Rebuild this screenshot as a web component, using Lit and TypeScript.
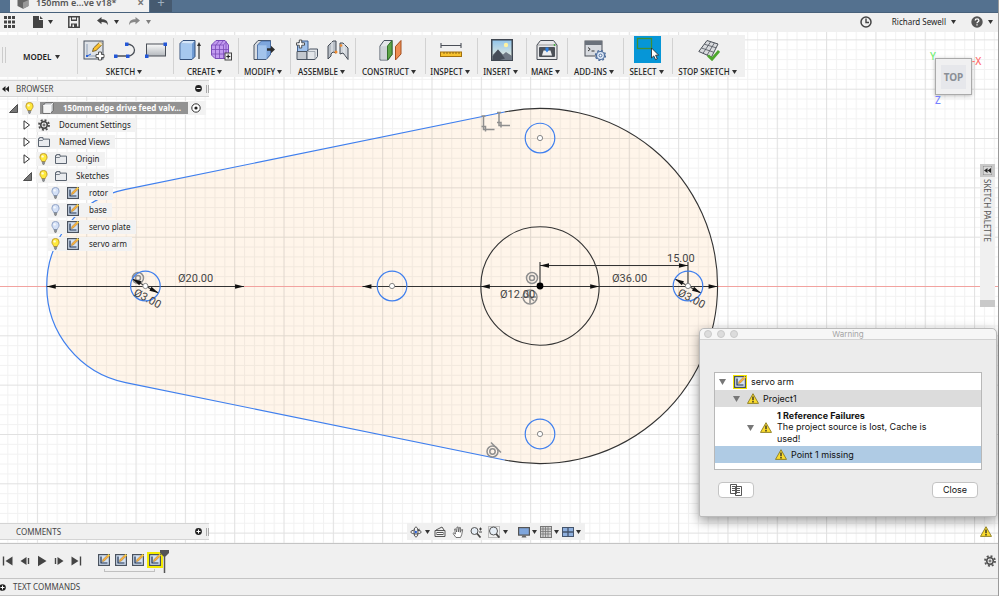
import { LitElement, html, svg, css, nothing, TemplateResult } from "lit";
import { customElement, property } from "lit/decorators.js";

const icon = (w: number, h: number, body: unknown) =>
  html`<svg width=${w} height=${h} viewBox="0 0 ${w} ${h}" aria-hidden="true">${body}</svg>`;

const caret = html`<svg class="caret" width="5" height="4" viewBox="0 0 5 4" aria-hidden="true"><path d="M0 0h5L2.5 4z" fill="#333"/></svg>`;

const sketchIcon = (marked = false) => html`<svg class=${marked ? "marked" : ""} width="12" height="12" viewBox="0 0 12 12" aria-hidden="true">
  <rect x=".6" y=".6" width="10.8" height="10.8" fill="#d3e1f3" stroke="#4a525e" stroke-width="1.2"/>
  <path d="M3 2.500v6.500h6.500" fill="none" stroke="#1d2f4d" stroke-width="1.2"/>
  <path d="M4.300 7.800l.6-2.300L9.700.9l1.400 1.400-4.700 4.700z" fill="#fbb03b" stroke="#8a6a2a" stroke-width=".4"/>
  <path d="M9.300 1.200L10.600 0 12 1.500l-1.200 1.200z" fill="#ffd84a"/>
</svg>`;

const gear = (s: number, color: string) => html`<svg width=${s} height=${s} viewBox="0 0 12 12" aria-hidden="true">
  <g fill="none" stroke=${color}><circle cx="6" cy="6" r="3.3" stroke-width="1.7"/>
  <circle cx="6" cy="6" r="5" stroke-width="1.8" stroke-dasharray="1.96 1.96"/><circle cx="6" cy="6" r="1" stroke-width="1"/></g></svg>`;

const folder = icon(12, 10, svg`<path d="M.5 9.500v-8h1V.6h3.500v1.500h6.500v7.400z" fill="#e9ebee" stroke="#5b6470"/><path d="M1 3.500h3.500l1-1.200" fill="none" stroke="#5b6470" stroke-width=".8"/>`);

const bulb = (on: boolean) => html`<svg width="11" height="12" viewBox="0 0 11 12" aria-hidden="true">
  <path d="M3.800 8.600C3.600 7 1.900 6.300 1.900 4a3.600 3.600 0 0 1 7.200 0c0 2.300-1.700 3-1.900 4.600z" fill=${on ? "#ffe93b" : "#d3e0f6"} stroke=${on ? "#b48a1c" : "#7f93bb"} stroke-width=".8"/>
  <circle cx="4.6" cy="3.4" r="1.2" fill="#fff" opacity=".8"/>
  <path d="M3.900 9.100h3.200M4 10.200h3M4.700 11.300h1.600" stroke="#5f6368" stroke-width=".9"/></svg>`;

const warnIcon = html`<svg width="12" height="11" viewBox="0 0 12 11" aria-hidden="true">
  <path d="M6 .7L11.500 10.400H.5z" fill="#fbdc2e" stroke="#8a7a1e" stroke-width=".9" stroke-linejoin="round"/>
  <path d="M6 3.600v3.600M6 8.100v1.300" stroke="#222" stroke-width="1.3"/></svg>`;

const cube = (w: number) => html`<svg width=${w} height=${w} viewBox="0 0 12 12" aria-hidden="true">
  <path d="M1 3.500L3.500.8h7.700v7.700L8.500 11.300H1z" fill="#d9dbde" stroke="#555" stroke-width=".8" stroke-linejoin="round"/>
  <path d="M1 3.500h7.500v7.800M8.500 3.500L11.200.8" fill="none" stroke="#fff" stroke-width=".8"/><path d="M1.400 4h6.700v6.900H1.400z" fill="#f4f4f4"/></svg>`;

const playIcons: [string, TemplateResult][] = [
  ["Go to start", icon(12, 12, svg`<path d="M1.500 1.500v9" stroke="#444" stroke-width="1.4"/><path d="M10.500 1.500v9L3.500 6z" fill="#444"/>`)],
  ["Step back", icon(12, 12, svg`<path d="M7.500 2v8L1.500 6z" fill="#444"/><path d="M9.500 3v6" stroke="#444" stroke-width="1.4"/>`)],
  ["Play", icon(12, 12, svg`<path d="M2 .8v10.400L10.500 6z" fill="#444"/>`)],
  ["Step forward", icon(12, 12, svg`<path d="M4.500 2v8l6-4z" fill="#444"/><path d="M2.500 3v6" stroke="#444" stroke-width="1.4"/>`)],
  ["Go to end", icon(12, 12, svg`<path d="M10.500 1.500v9" stroke="#444" stroke-width="1.4"/><path d="M1.500 1.500v9l7-4.500z" fill="#444"/>`)],
];

const tool = {
  sketch: icon(22, 22, svg`<rect x="1" y="2" width="19" height="18" fill="#dfe3e8" stroke="#4d5560"/>
    <path d="M4 5v12h9" fill="none" stroke="#8fa0b8"/><path d="M4 17l4-2" stroke="#2b62d9"/><rect x="3" y="16" width="2" height="2" fill="#2b62d9"/>
    <path d="M9.500 12.500l1-3.500 6.500-6.200 2.600 2.400-6.500 6.300z" fill="#fbc02d" stroke="#5d4a1a" stroke-width=".8"/><path d="M15.600 4L17 2.800l2.600 2.400-1.300 1.300z" fill="#f2e3c0"/>
    <path d="M15.500 13h3v2.500H21v3h-2.500V21h-3v-2.500H13v-3h2.500z" fill="#fff" stroke="#444" stroke-width=".9"/>`),
  line: icon(22, 22, svg`<path d="M2 17h12M13 5c4 0 7.500 2.500 7.500 6s-3 6-6.500 6" fill="none" stroke="#4a4f57" stroke-width="1.3"/>
    <g fill="#2458d8"><rect x="0" y="15.5" width="3.5" height="3.5"/><rect x="12" y="15.5" width="3.5" height="3.5"/><rect x="11" y="3.5" width="3.5" height="3.5"/></g>`),
  rect: icon(22, 22, svg`<defs><linearGradient id="rg" x2="0" y2="1"><stop stop-color="#fafafa"/><stop offset="1" stop-color="#b4b8bd"/></linearGradient></defs>
    <rect x="1.5" y="5" width="19" height="12" fill="url(#rg)" stroke="#4a4f57"/><g fill="#2458d8"><rect x="0" y="15.5" width="3.5" height="3.5"/><rect x="18.5" y="3.5" width="3.5" height="3.5"/></g>`),
  extrude: icon(22, 22, svg`<path d="M1 4.500L4 1.500h12v16L13 20.500H1z" fill="#6f9bd4" stroke="#34507a"/><path d="M1.500 5H13v15H1.500z" fill="#a6c8ef"/><path d="M1.500 4.500L4.200 2h11.300L13 4.800z" fill="#d5e6f9"/>
    <path d="M20 20V5" stroke="#333" stroke-width="1.2"/><path d="M18 7l2-4 2 4z" fill="#333"/>`),
  form: icon(22, 22, svg`<path d="M1.500 6L6 1.500h9L18.500 6v9L15 19.500H5L1.500 16z" fill="#c29af0" stroke="#7a4bb8" stroke-linejoin="round"/><path d="M2 6h11.500v13M5.500 6v13M9.500 6v13M2 10.500h16M2 15h16M13.500 6l3-3.500M6 6l3-4M10 6l3-4M16 4v13" fill="none" stroke="#7a4bb8" stroke-width=".8"/>
    <rect x="15" y="14" width="6.5" height="7" fill="#eee" stroke="#444"/><path d="M18.200 15.500v4M16.300 17.500h4" stroke="#222" stroke-width="1.2"/>`),
  modify: icon(22, 22, svg`<path d="M1 6l4-4.500h12.500v14L13 20.500H1z" fill="#d9dde2" stroke="#4a5462" stroke-linejoin="round"/><path d="M4.500 6L8.500 2h9v13.500l-4 4.500h-9z" fill="#7ea6dc" stroke="#3f669e" stroke-width=".8"/><path d="M5 6.300h8.500V20H5z" fill="#a3c4ec"/>
    <path d="M14 9.300h4V6.800l4 3.700-4 3.700v-2.400h-4z" fill="#2d2d2d"/>`),
  component: icon(22, 22, svg`<path d="M1.500 13V4.500L4 2h8v9l-2 2z" fill="#9fc1ec" stroke="#3e5f8f"/><path d="M1 12.500h10v8H1z" fill="#c3c8cf" stroke="#4a5462"/><path d="M11 12.500l2.500-2.500H21.500v7.500l-2.500 3h-8z" fill="#e2e5e9" stroke="#4a5462"/><path d="M11 12.500h8v8" fill="none" stroke="#9299a2" stroke-width=".8"/>
    <path d="M3.300 1h2.400v2.800h2.800v2.400H5.700V9H3.300V6.200H.5V3.800h2.800z" fill="#fff" stroke="#333" stroke-width=".8"/>`),
  joint: icon(22, 22, svg`<path d="M1 20V7l5-5h3v12l-3-1-2 2v2z" fill="#b9bfc7" stroke="#444b55" stroke-linejoin="round"/><path d="M21 20.500V9l-5-5h-3v11l3-1 2 2.500z" fill="#d2d6db" stroke="#444b55" stroke-linejoin="round"/>
    <path d="M5 3v10M17 5v9" stroke="#eef0f2"/><circle cx="9" cy="13" r="1.5" fill="#f08a2c"/><circle cx="14" cy="6.5" r="1.3" fill="#f08a2c"/>`),
  construct: icon(23, 22, svg`<path d="M1 7l4-5.500h8v14L9 21H1z" fill="#e4e6e9" stroke="#4a5462" stroke-linejoin="round"/><path d="M1.500 7.200h6.500V20.500H1.500z" fill="#cfd3d8"/><path d="M8.500 7L13 1.500v14L8.500 21z" fill="#5da648" stroke="#33702a"/>
    <path d="M16.500 7.500L22 1.500v13.500l-5.500 6z" fill="#ee8d52" stroke="#a44e1e"/>`),
  inspect: icon(22, 22, svg`<path d="M1 6.500h20M1 4v5M21 4v5" stroke="#4a4f57" stroke-width="1.1"/><rect x=".5" y="13" width="21" height="4.500" fill="#f7c22f" stroke="#a3710e"/><path d="M4 13v2M7 13v2M10 13v2M13 13v2M16 13v2M19 13v2" stroke="#7a540a" stroke-width=".8"/>`),
  insert: icon(22, 22, svg`<defs><linearGradient id="sky" x2="0" y2="1"><stop stop-color="#8fc3ea"/><stop offset="1" stop-color="#f3f1dc"/></linearGradient></defs>
    <rect x=".75" y=".75" width="20.5" height="20.5" fill="url(#sky)" stroke="#3f4650" stroke-width="1.5"/><circle cx="15" cy="6" r="2.2" fill="#fff2a0"/><path d="M1.500 16l5.500-5.500 5 5 3-2.500 6 4v4H1.500z" fill="#6f7884"/><path d="M1.500 17.500l5.500-7 7 9-5 1.500H1.500z" fill="#464d58"/>`),
  make: icon(22, 22, svg`<path d="M1 6l3.500-4.500h13L21 6v14.500H1z" fill="#e7e8ea" stroke="#4a4f57" stroke-linejoin="round"/><path d="M2 6h18" stroke="#999"/><rect x="3" y="8" width="16" height="10" rx="1" fill="#4c5158"/><path d="M6 16.500l1.500-5h7l1.500 5z" fill="#eceef0"/><path d="M9.500 8.500h3v3L11 13.500l-1.500-2z" fill="#2d7fe0"/><circle cx="18.5" cy="6" r=".9" fill="#3fae3a"/>`),
  addins: icon(22, 22, svg`<rect x="1" y="2" width="17" height="15" fill="#d8dbe0" stroke="#4a4f57"/><rect x="1" y="2" width="17" height="4" fill="#6a717b"/><path d="M4 8.500l2.200 1.800L4 12M7.500 12h3" fill="none" stroke="#333"/>
    <circle cx="16.5" cy="16.5" r="4" fill="#dbe7f6" stroke="#4f6f9e" stroke-width="1.2"/><circle cx="16.5" cy="16.5" r="5" fill="none" stroke="#4f6f9e" stroke-width="1.3" stroke-dasharray="1.96 1.96"/><circle cx="16.5" cy="16.5" r="1.4" fill="#fff" stroke="#4f6f9e"/>`),
  select: icon(27, 27, svg`<path d="M0 0h27v27H0z" fill="#0696d7"/><rect x="3.5" y="2.5" width="14" height="10" fill="none" stroke="#3f8f36" stroke-width="1.3"/>
    <path d="M17.500 12v10l2.300-2.100 1.700 3.700 1.800-.8-1.700-3.600h3.100z" fill="#fff" stroke="#222" stroke-width=".8"/>`),
  stop: icon(22, 22, svg`<path d="M9 1.500l11 3.500-6.500 13L.8 12.500z" fill="#d9dbde" stroke="#4c525a" stroke-linejoin="round"/><path d="M12.700 2.700L5 14.300M16.400 3.900L9 16.200M6.300 5.200l11.800 3.600M3.500 9l12.400 4.300" stroke="#4c525a" stroke-width=".8"/>
    <path d="M10 16.500l4 3.700L21 12" fill="none" stroke="#4ea72e" stroke-width="2.8"/>`),
};

const groups: { label: string; icons: TemplateResult[] }[] = [
  { label: "SKETCH", icons: [tool.sketch, tool.line, tool.rect] },
  { label: "CREATE", icons: [tool.extrude, tool.form] },
  { label: "MODIFY", icons: [tool.modify] },
  { label: "ASSEMBLE", icons: [tool.component, tool.joint] },
  { label: "CONSTRUCT", icons: [tool.construct] },
  { label: "INSPECT", icons: [tool.inspect] },
  { label: "INSERT", icons: [tool.insert] },
  { label: "MAKE", icons: [tool.make] },
  { label: "ADD-INS", icons: [tool.addins] },
  { label: "SELECT", icons: [tool.select] },
  { label: "STOP SKETCH", icons: [tool.stop] },
];

const base = css`
  :host { box-sizing: border-box; font: 8px/12px "Noto Sans", sans-serif; color: #222; }
  *, *::before, *::after { box-sizing: border-box; }
  svg { display: block; flex: none; }
  button { font: inherit; color: inherit; background: none; border: 0; padding: 0; margin: 0; display: flex; align-items: center; }
  ul { list-style: none; margin: 0; padding: 0; }
`;

@customElement("title-bar")
class TitleBar extends LitElement {
  static styles = [base, css`
    :host { display: block; flex: none; }
    .tabs { display: flex; align-items: flex-end; height: 13px; overflow: hidden; background: #54718f; border-bottom: 1px solid #48617b; padding-left: 10px; }
    .tab { display: flex; align-items: center; width: 139px; height: 20px; margin-bottom: -1px; padding: 0 5px 1px 7px; background: #f0f0f0; font: 600 9px/12px "Noto Sans", sans-serif; color: #555; }
    .tab span { flex: 1; margin-left: 7px; white-space: nowrap; }
    .tab button { font: 700 12px/12px "Noto Sans", sans-serif; color: #777; }
    .add { width: 22px; height: 20px; margin-left: 1px; justify-content: center; background: #465a70; color: #9fb0c0; font-size: 13px; }
    .bar { display: flex; align-items: center; height: 19px; padding: 0 9px 1px 3px; background: #f0f0f0; }
    .bar button { gap: 5px; }
    .file { margin-left: 17px; } .save { margin-left: 15px; } .undo { margin-left: 16px; } .redo { margin-left: 9px; opacity: .6; }
    .clock { margin-left: auto; } .user { margin-left: 20px; } .help { margin-left: 17px; }
    .bar { padding-right: 5px; } .help { margin-left: 15px; }
  `];
  render() {
    return html`
      <div class="tabs">
        <div class="tab">
          ${icon(12, 12, svg`<path d="M6 .5l5.500 2.500v6L6 11.800.5 9V3z" fill="#666"/><path d="M6 5.500V12L11.500 9V3z" fill="#999"/>`)}
          <span>150mm e...ve v18*</span><button aria-label="Close tab">×</button>
        </div>
        <button class="add" aria-label="New tab">+</button>
      </div>
      <div class="bar">
        <button aria-label="Data panel">${icon(13, 12, svg`<path d="M2.500 0v12M6.500 0v12M10.500 0v12" stroke="#444" stroke-width="3" stroke-dasharray="3 1.500"/>`)}</button>
        <button class="file" aria-label="File">${icon(10, 12, svg`<path d="M0 0h6v4h4v8H0z M7 0l3 3H7z" fill="#444"/>`)}${caret}</button>
        <button class="save" aria-label="Save">${icon(12, 12, svg`<path d="M.8.8h10.400v10.400H.8z" fill="none" stroke="#444" stroke-width="1.5"/><path d="M3 .5h6v4.500H3zM3 7.500h6V12H3z" fill="#444"/><path d="M4 1.500h4v2H4zM4.500 8.500h1.500V11H4.500z" fill="#eee"/>`)}</button>
        <button class="undo" aria-label="Undo">${icon(13, 12, svg`<path d="M1 4.500L5.500 1v2.300c4 0 6.500 1.500 6.500 6-1-2.300-3-3.300-6.500-3.300v2.200z" fill="#444"/>`)}${caret}</button>
        <button class="redo" aria-label="Redo">${icon(13, 12, svg`<path d="M12 4.500L7.500 1v2.300C3.500 3.300 1 4.800 1 9.300 2 7 4 6 7.500 6v2.200z" fill="#444"/>`)}${caret}</button>
        <button class="clock" aria-label="Job status">${icon(12, 12, svg`<circle cx="6" cy="6" r="5" fill="none" stroke="#444" stroke-width="1.5"/><path d="M6 2.500V6.500h3" fill="none" stroke="#444" stroke-width="1.4"/>`)}</button>
        <button class="user">Richard Sewell ${caret}</button>
        <button class="help" aria-label="Help">${icon(12, 12, svg`<circle cx="6" cy="6" r="5.7" fill="#555"/><path d="M4.200 4.600c0-2.500 3.700-2.300 3.700-.2C7.900 5.800 6 5.600 6 7.200M6 8.200v1.400" fill="none" stroke="#fff" stroke-width="1.3"/>`)}${caret}</button>
      </div>`;
  }
}

@customElement("tool-ribbon")
class ToolRibbon extends LitElement {
  static styles = [base, css`
    :host { display: grid; grid-template-columns: 77px 96px 65px 52px 65px 70px 52px 49px 41px 56px 49px 73px; justify-content: start; width: max-content; height: 42px; background: #f0f0f0; font-weight: 500; }
    .mode { position: relative; display: flex; align-items: center; padding-left: 23px; font-weight: 600; }
    .mode::before { content: ""; position: absolute; left: 2px; top: 12px; width: 4px; height: 16px; border: solid #ccc; border-width: 0 1px; }
    .mode button { gap: 4px; }
    .group { position: relative; display: flex; flex-direction: column; align-items: center; }
    .group::before { content: ""; position: absolute; left: 0; top: 3px; bottom: 4px; width: 1px; background: #d2d2d2; }
    .icons { display: flex; gap: 9px; align-items: center; height: 29px; }
    .label { gap: 2px; height: 12px; margin-top: 2px; margin-right: 2px; white-space: nowrap; }
  `];
  render() {
    return html`
      <div class="mode"><button>MODEL ${caret}</button></div>
      ${groups.map(g => html`<div class="group">
        <div class="icons">${g.icons.map((i, n) => html`<button aria-label="${g.label} tool ${n + 1}">${i}</button>`)}</div>
        <button class="label">${g.label}${caret}</button>
      </div>`)}`;
  }
}

interface Node { label: string; level: number; open?: boolean; light?: boolean; glyph: TemplateResult; }
const nodes: Node[] = [
  { label: "150mm edge drive feed valv...", level: 0, open: true, light: true, glyph: cube(12) },
  { label: "Document Settings", level: 1, open: false, glyph: gear(12, "#4a4a4a") },
  { label: "Named Views", level: 1, open: false, glyph: folder },
  { label: "Origin", level: 1, open: false, light: true, glyph: folder },
  { label: "Sketches", level: 1, open: true, light: true, glyph: folder },
  { label: "rotor", level: 2, light: false, glyph: sketchIcon() },
  { label: "base", level: 2, light: false, glyph: sketchIcon() },
  { label: "servo plate", level: 2, light: false, glyph: sketchIcon() },
  { label: "servo arm", level: 2, light: true, glyph: sketchIcon() },
];

@customElement("panel-head")
class PanelHead extends LitElement {
  @property() label = "";
  @property({ type: Boolean }) open = false;
  static styles = [base, css`
    :host { display: flex; align-items: center; width: 209px; height: 17px; padding: 0 0 0 5px; background: #f0f0f0; border: solid #d4d4d4; border-width: 1px 0; color: #444; }
    .rewind { width: 11px; margin-left: -3px; margin-right: 3px; }
    .name { flex: 1; }
    .grip { width: 3px; height: 8px; margin-left: 4px; border: solid #aaa; border-width: 0 1px; }
  `];
  render() {
    return html`
      <span class="rewind">${this.open ? icon(7, 6, svg`<path d="M3.500 0v6L0 3zM7 0v6L3.500 3z" fill="#222"/>`) : nothing}</span>
      <span class="name">${this.label}</span>
      <button aria-label="Toggle ${this.label}">${icon(7, 7, svg`<circle cx="3.5" cy="3.5" r="3.4" fill="#222"/><path d=${this.open ? "M1.500 3.500h4" : "M1.500 3.500h4M3.500 1.500v4"} stroke="#fff"/>`)}</button>
      <span class="grip"></span>`;
  }
}

@customElement("browser-tree")
class BrowserTree extends LitElement {
  static styles = [base, css`
    :host { display: block; }
    ul { display: flex; flex-direction: column; gap: 3px; padding-top: 4px; }
    li { display: flex; align-items: center; height: 14px; }
    .level0 { padding-left: 8px; } .level1 { padding-left: 22px; } .level2 { padding-left: 34px; }
    .twist { width: 14px; }
    .twist svg { margin-left: 1px; }
    .chip { display: flex; align-items: center; height: 14px; padding: 0 5px 0 2px; background: #f2f2f2; }
    .bulb { width: 11px; margin-right: 6px; }
    .label { margin-left: 9px; white-space: nowrap; }
    .level2 .label { margin-left: 10px; }
    .level0 .bulb { margin-right: 5px; }
    .title { display: flex; align-items: center; width: 148px; height: 12px; padding-left: 2px; background: #929292; color: #fff; font-weight: 700; }
    .level0 .label { width: 122px; overflow: hidden; margin-left: 9px; }
    .target { margin-left: 3px; }
  `];
  private row(n: Node) {
    const body = html`${n.glyph}<span class="label">${n.label}</span>`;
    return html`<li class="level${n.level}">
      <span class="twist">${n.open === undefined ? nothing : html`<button aria-label="Toggle ${n.label}">${n.open
        ? icon(9, 9, svg`<path d="M8.500.5v8h-8z" fill="#777" stroke="#333" stroke-width=".8"/>`)
        : icon(8, 10, svg`<path d="M1 .8v8.400L6.500 5z" fill="#fff" stroke="#333"/>`)}</button>`}</span>
      <div class="chip">
        ${n.light === undefined ? nothing : html`<button class="bulb" aria-label="Visibility of ${n.label}">${bulb(n.light)}</button>`}
        ${n.level === 0 ? html`<div class="title">${body}</div><button class="target" aria-label="Activate">${icon(10, 10, svg`<circle cx="5" cy="5" r="4.2" fill="#fff" stroke="#333"/><circle cx="5" cy="5" r="1.6" fill="#222"/>`)}</button>` : body}
      </div></li>`;
  }
  render() { return html`<ul>${nodes.map(n => this.row(n))}</ul>`; }
}

const CX = 540, CY = 254, UNIT = 9.865;
const hole = (x: number, y: number) => svg`<circle class="edge" cx=${x} cy=${y} r="14.8"/><circle cx=${x} cy=${y} r="2.6" fill="#fff" stroke="#888"/>`;
const arrow = (x: number, y: number, angle: number) => svg`<path d="M0 0l-9-2.200v4.400z" fill="#111" transform="translate(${x} ${y}) rotate(${angle})"/>`;

@customElement("sketch-canvas")
class SketchCanvas extends LitElement {
  static styles = [base, css`
    :host { display: block; overflow: hidden; background: #fff; }
    svg { width: 100%; height: 100%; }
    .edge { fill: none; stroke: #3f7fee; stroke-width: 1.2; }
    .fixed { fill: none; stroke: #333; stroke-width: 1.1; }
    .dim { stroke: #333; stroke-width: 1.1; }
    .axis { stroke: #f2a3a0; }
    text { font: 11px Roboto, sans-serif; fill: #444; }
    .glyph { fill: none; stroke: #8f8f8f; stroke-width: 1.5; }
    .minor { fill: none; stroke: #000; stroke-opacity: .05; }
    .major { fill: none; stroke: #000; stroke-opacity: .07; }
  `];
  render() {
    const R = 18 * UNIT, r = 10 * UNIT, X2 = CX - 40 * UNIT;
    const s = (R - r) / (CX - X2), c = Math.sqrt(1 - s * s);
    const bx = CX - R * s, by = R * c, sx = X2 - r * s, sy = r * c;
    const y = CY;
    const left = X2, mid = CX - 15 * UNIT, right = CX + 15 * UNIT;
    const major = UNIT * 5;
    return html`<svg role="img" aria-label="Servo arm sketch">
      <defs>
        <pattern id="minor" width=${UNIT} height=${UNIT} patternUnits="userSpaceOnUse" x=${CX - UNIT} y=${CY}><path class="minor" d="M.5 0V10M0 .5H10"/></pattern>
        <pattern id="major" width=${major} height=${major} patternUnits="userSpaceOnUse" x=${CX - UNIT} y=${CY}><path class="major" d="M.5 0V50M0 .5H50"/></pattern>
      </defs>
      <path d="M${bx} ${y - by}A${R} ${R} 0 1 1 ${bx} ${y + by}L${sx} ${y + sy}A${r} ${r} 0 0 1 ${sx} ${y - sy}z" fill="#fff5ea"/>
      <rect width="100%" height="100%" fill="url(#minor)"/><rect width="100%" height="100%" fill="url(#major)"/>
      <path class="axis" d="M0 ${y + .5}H4000"/>
      <path class="fixed" d="M${bx} ${y - by}A${R} ${R} 0 1 1 ${bx} ${y + by}"/>
      <path class="edge" d="M${bx} ${y - by}L${sx} ${y - sy}A${r} ${r} 0 0 0 ${sx} ${y + sy}L${bx} ${y + by}"/>
      <circle class="fixed" cx=${CX} cy=${y} r=${6 * UNIT}/>
      <path class="dim" d="M${X2 - r} ${y + .5}H${X2 + r}M${CX - R} ${y + .5}H${CX + R}M${CX} ${y}V230M${right} ${y}V230M${CX} 233.500H${right}"/>
      ${arrow(X2 - r, y + .5, 180)}${arrow(X2 + r, y + .5, 0)}${arrow(CX - R, y + .5, 180)}${arrow(CX + R, y + .5, 0)}
      ${arrow(CX - 6 * UNIT, y + .5, 180)}${arrow(CX + 6 * UNIT, y + .5, 0)}${arrow(CX, 233.5, 180)}${arrow(right, 233.5, 0)}
      <g class="glyph"><circle cx="138" cy="246" r="5.5"/><circle cx="138" cy="246" r="2.5"/></g>
      ${[left, right].map(x => svg`<path class="dim" d="M${x - 13} ${y - 7}L${x + 13} ${y + 7}"/>${arrow(x - 13, y - 7, 208)}${arrow(x + 13, y + 7, 28)}`)}
      ${hole(left, y)}${hole(mid, y)}${hole(right, y)}${hole(CX, y - 15 * UNIT)}${hole(CX, y + 15 * UNIT)}
      <g class="glyph">
        <circle cx="532" cy="246" r="5.5"/><circle cx="532" cy="246" r="2.5"/>
        <circle cx="530" cy="265" r="7"/><path d="M524 265h12M530 259v12M526 261l8 8"/>
        <path d="M483.500 84v13.500h11M481.500 84h4M481.500 94.500h4v5M499 80v13.500h11M497 80.500h4M497 90.500h4v5"/>
        <circle cx="492.5" cy="419.5" r="5.5"/><circle cx="492.5" cy="419.5" r="2.7"/><path d="M491 410.500l10 10"/>
      </g>
      <circle cx=${CX} cy=${y} r="3.4" fill="#000"/>
      <text x="178" y="250">Ø20.00</text><text x="612" y="250">Ø36.00</text><text x="500" y="266">Ø12.00</text><text x="667" y="230">15.00</text>
      <text transform="translate(133 263) rotate(28)">Ø3.00</text><text transform="translate(677 263) rotate(28)">Ø3.00</text>
    </svg>`;
  }
}

@customElement("view-cube")
class ViewCube extends LitElement {
  static styles = [base, css`
    :host { display: block; position: relative; width: 37px; height: 37px; }
    .face { width: 37px; height: 37px; justify-content: center; background: #f0f0f1; border: 1px solid #aaa; box-shadow: 0 1px 4px #0004; font: 700 10px/12px "Noto Sans", sans-serif; color: #8b8f96; }
    .face span { padding: 6px 3px; background: #e6e7eb; }
    .x, .y, .z { position: absolute; font: 500 10px/10px "Noto Sans", sans-serif; }
    .x { left: 37px; top: -2px; color: #ff7070; white-space: nowrap; }
    .y { left: -5px; top: -7px; color: #74ee74; }
    .z { left: 0; top: 37px; color: #7480ff; }
  `];
  render() { return html`<span class="y">Y</span><span class="z">Z</span><span class="x">-X</span><button class="face"><span>TOP</span></button>`; }
}

const navItems: { name: string; menu: boolean; pic: TemplateResult }[] = [
  { name: "Orbit", menu: true, pic: icon(12, 12, svg`<path d="M4.500 4C2.500 4.300.8 5 .8 6c0 1.200 2.400 2 5.200 2s5.200-.8 5.200-2c0-.9-1.400-1.600-3.200-1.900" fill="none" stroke="#555"/><ellipse cx="6" cy="6" rx="2" ry="5.2" fill="none" stroke="#555"/><path d="M9.500 2.500L7.500 4l2 1.600z" fill="#444"/><circle cx="5.800" cy="6" r="1.2" fill="#2b62d9"/>`) },
  { name: "Look at", menu: false, pic: icon(12, 12, svg`<path d="M2 4L8 1l2 3M1 4.500h10v6H1z" fill="#eee" stroke="#555"/><rect x="3" y="6.5" width="6" height="2" fill="#fff" stroke="#555"/>`) },
  { name: "Pan", menu: false, pic: icon(12, 12, svg`<path d="M4 11.500L1 7.500l.9-.7L3.500 8 2.600 3l1-.2L4.700 6 5 1h1.200l.4 5 .9-4.600 1 .2L8.300 6.300l1.500-3 .9.4-1 5-1.200 2.800z" fill="#fff" stroke="#555" stroke-width=".8"/>`) },
  { name: "Zoom", menu: false, pic: icon(12, 12, svg`<circle cx="4.5" cy="5" r="3.5" fill="#e6eef6" stroke="#555"/><path d="M7 7.500l3.500 4" stroke="#444" stroke-width="1.7"/><path d="M9 3h3M10.500 1.500v3M9 6h3" stroke="#333" stroke-width=".9"/>`) },
  { name: "Fit", menu: true, pic: icon(12, 12, svg`<rect x=".5" y=".5" width="11" height="11" fill="none" stroke="#888" stroke-dasharray="1 1"/><circle cx="5.5" cy="5" r="4" fill="#e6eef6" stroke="#555"/><path d="M8.300 8l3 3.500" stroke="#444" stroke-width="1.8"/>`) },
  { name: "Display", menu: true, pic: icon(12, 12, svg`<rect x=".6" y="1.6" width="10.8" height="7.5" fill="#7fa6dc" stroke="#555" stroke-width="1.2"/><path d="M4.500 9.500h3l1 2h-5z" fill="#666"/>`) },
  { name: "Grid", menu: true, pic: icon(12, 12, svg`<rect x=".5" y=".5" width="11" height="11" fill="#d2d2d2" stroke="#777"/><path d="M3 0v12M5.500 0v12M8 0v12M0 3h12M0 5.500h12M0 8h12" stroke="#777" stroke-width=".8"/>`) },
  { name: "Viewports", menu: true, pic: icon(12, 12, svg`<rect x=".5" y="1.5" width="11" height="9" fill="#8fb0de" stroke="#44546c"/><path d="M6 1v10M0 6h12" stroke="#44546c" stroke-width="1.3"/>`) },
];

@customElement("nav-bar")
class NavBar extends LitElement {
  static styles = [base, css`
    :host { display: flex; align-items: center; height: 17px; padding: 0 2px; background: #f0f0f0; }
    button { gap: 3px; padding: 0 1px; margin-right: 4px; }
    button:first-of-type { margin-right: 2px; }
    button:nth-of-type(5) { margin-right: 8px; }
    button:nth-of-type(n+6) { margin-right: 0; gap: 2px; padding-right: 2px; }
  `];
  render() { return navItems.map(n => html`<button aria-label=${n.name}>${n.pic}${n.menu ? caret : nothing}</button>`); }
}

@customElement("warning-dialog")
class WarningDialog extends LitElement {
  static styles = [base, css`
    :host { display: block; width: 298px; background: #ececec; border: 1px solid #bbb; border-radius: 5px 5px 2px 2px; box-shadow: 0 4px 12px #0006; font: 9px/12px Inter, sans-serif; color: #111; }
    header { position: relative; height: 11px; border-bottom: 1px solid #d2d2d2; background: #f6f6f6; border-radius: 5px 5px 0 0; text-align: center; font: 8px/10px Inter, sans-serif; color: #a5a5a5; }
    .lights { position: absolute; left: 4px; top: 1px; display: flex; gap: 5px; }
    .lights button { width: 8px; height: 8px; border-radius: 50%; background: #dcdcdc; border: 1px solid #cacaca; }
    ul { margin: 32px 14px 0; padding: 0 0 6px; background: #fff; border: 1px solid #b8b8b8; }
    li { display: flex; align-items: center; gap: 4px; min-height: 17px; }
    .twist { width: 8px; margin-right: 2px; }
    .l1 { padding-left: 4px; gap: 5px; } .l2 { padding-left: 18px; background: #dcdcdc; } .l3 { padding: 3px 50px 1px 32px; gap: 4px; line-height: 12px; }
    .l3 span { margin-left: 1px; }
    .l4 { padding-left: 60px; background: #afcbe4; }
    b { display: block; line-height: 11px; }
    .marked { outline: 1px solid #f3e600; background: #f3e600; }
    footer { display: flex; justify-content: space-between; margin: 12px 18px 18px; }
    footer button { height: 16px; justify-content: center; background: #fff; border: 1px solid #c4c4c4; border-radius: 4px; }
    .copy { width: 36px; } .close { width: 46px; }
  `];
  render() {
    const twist = html`<button class="twist" aria-label="Collapse">${icon(7, 6, svg`<path d="M0 0h7L3.500 6z" fill="#777"/>`)}</button>`;
    return html`
      <header><div class="lights"><button aria-label="Close window"></button><button aria-label="Minimise"></button><button aria-label="Maximise"></button></div>Warning</header>
      <ul>
        <li class="l1">${twist}${sketchIcon(true)}<span>servo arm</span></li>
        <li class="l2">${twist}${warnIcon}<span>Project1</span></li>
        <li class="l3">${twist}${warnIcon}<span><b>1 Reference Failures</b>The project source is lost, Cache is used!</span></li>
        <li class="l4">${warnIcon}<span>Point 1 missing</span></li>
      </ul>
      <footer>
        <button class="copy" aria-label="Copy">${icon(12, 12, svg`<g fill="#fff" stroke="#444" stroke-width=".9"><path d="M.5.5h6v9h-6zM5.500 2.500h6v9h-6z"/><path d="M2 2.500h3M2 4.500h3M2 6.500h3M7 4.500h3M7 6.500h3M7 8.500h3"/></g>`)}</button>
        <button class="close">Close</button>
      </footer>`;
  }
}

@customElement("app-root")
class AppRoot extends LitElement {
  static styles = [base, css`
    :host { display: flex; flex-direction: column; min-height: 100vh; border-right: 1px solid #9a9a9a; background: #f0f0f0; }
    .space { position: relative; flex: 1; display: flex; flex-direction: column; align-items: flex-start; }
    sketch-canvas { position: absolute; inset: 0; }
    .space > :not(sketch-canvas) { z-index: 1; }
    tool-ribbon { margin: 3px 0; }
    .foot { align-self: stretch; display: grid; grid-template-columns: 1fr auto 1fr; align-items: center; margin: auto 6px 3px 0; }
    .alert { justify-self: end; }
    view-cube { position: absolute; right: 26px; top: 26px; }
    warning-dialog { position: absolute; right: 1px; top: 296px; }
    .palette { position: absolute; right: 3px; top: 132px; display: flex; flex-direction: column; width: 15px; height: 143px; background: #f0f0f0; border-bottom: 7px solid #c9c9c9; color: #555; }
    .palette button { justify-content: center; height: 13px; background: #c9c9c9; }
    .palette span { writing-mode: vertical-rl; line-height: 15px; margin-top: 2px; }
    .timeline { position: relative; display: flex; align-items: center; height: 36px; padding: 0 2px; border: solid #c4c4c4; border-width: 1px 0; }
    .play { display: flex; gap: 5px; }
    .features { display: flex; gap: 5px; margin: 0 0 2px 16px; position: relative; }
    .features::after { content: ""; position: absolute; left: 6px; right: 6px; top: 15px; height: 3px; border: 1px solid #c0c0c0; border-top: 0; }
    .marked { outline: 2px solid #f3ea00; }
    .marker { position: absolute; right: -8px; top: -4px; }
    .settings { margin-left: auto; }
    .text { display: flex; align-items: center; gap: 7px; height: 17px; border-bottom: 1px solid #c4c4c4; color: #444; }
  `];
  render() {
    return html`
      <title-bar></title-bar>
      <main class="space">
        <sketch-canvas></sketch-canvas>
        <tool-ribbon></tool-ribbon>
        <panel-head label="BROWSER" open></panel-head>
        <browser-tree></browser-tree>
        <view-cube></view-cube>
        <aside class="palette"><button aria-label="Expand sketch palette">${icon(9, 9, svg`<path d="M0 0h9v9H0z" fill="#d8d8d8" stroke="#777" stroke-width=".8"/><path d="M4.500 2v5L1 4.500zM8 2v5L4.500 4.500z" fill="#222"/>`)}</button><span>SKETCH PALETTE</span></aside>
        <warning-dialog role="dialog" aria-label="Warning"></warning-dialog>
        <div class="foot">
          <panel-head label="COMMENTS"></panel-head>
          <nav-bar></nav-bar>
          <button class="alert" aria-label="Show warnings">${warnIcon}</button>
        </div>
      </main>
      <section class="timeline">
        <div class="play">${playIcons.map(([name, pic]) => html`<button aria-label=${name}>${pic}</button>`)}</div>
        <div class="features">${[0, 1, 2, 3].map(n => html`<button aria-label="Sketch ${n + 1}">${sketchIcon(n === 3)}</button>`)}
          <span class="marker">${icon(9, 23, svg`<path d="M0 0h9v3L5.500 6.500h-2L0 3z" fill="#555"/><path d="M4.500 5v18" stroke="#555" stroke-width="1.5"/>`)}</span></div>
        <button class="settings" aria-label="Timeline settings">${gear(12, "#555")}</button>
      </section>
      <footer class="text"><button aria-label="Expand text commands">${icon(6, 7, svg`<circle cx="2.5" cy="3.5" r="3.3" fill="#222"/><path d="M.5 3.500h4M2.500 1.500v4" stroke="#fff"/>`)}</button><span>TEXT COMMANDS</span></footer>`;
  }
}
